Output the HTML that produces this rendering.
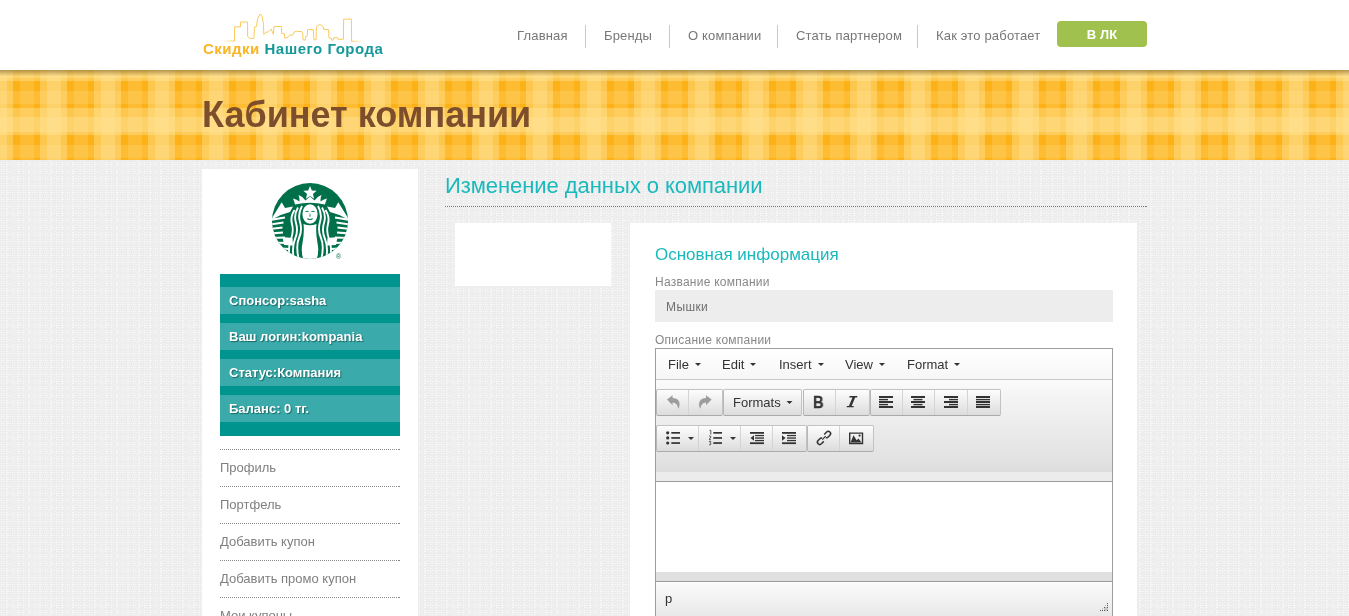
<!DOCTYPE html>
<html><head><meta charset="utf-8">
<style>
*{box-sizing:border-box}
html,body{margin:0;padding:0}
body>*{will-change:transform}
body{width:1349px;height:616px;overflow:hidden;position:relative;font-family:"Liberation Sans",sans-serif;background-color:#ececec}
.abs{position:absolute}
#hdr{left:0;top:0;width:1349px;height:70px;background:#fff}
.nav{position:absolute;top:28px;font-size:13px;color:#777;line-height:15px;white-space:nowrap;letter-spacing:.17px}
.sep{position:absolute;top:25px;width:1px;height:23px;background:#c9c9c9}
#btn{left:1057px;top:21px;width:90px;height:26px;background:#a0c14e;border-radius:4px;color:#fff;font-weight:bold;font-size:13px;text-align:center;line-height:28px;letter-spacing:.15px}
#banner{left:0;top:70px;width:1349px;height:90px;overflow:hidden}
#title{left:202px;top:94px;font-size:36px;font-weight:bold;color:#7d4e2b;line-height:41px;white-space:nowrap}
#side{left:202px;top:169px;width:216px;height:460px;background:#fff}
#teal{left:220px;top:274px;width:180px;height:162px;background:#00948f}
.row{position:absolute;left:0;width:180px;height:27px;background:#3aabaa;color:#fff;font-weight:bold;font-size:13px;line-height:15px;padding:6px 0 0 9px;text-shadow:1px 1px 1px rgba(0,50,50,.55);white-space:nowrap}
.mi{position:absolute;left:220px;width:180px;background:linear-gradient(to right,transparent 179px,#888 179px) no-repeat 0 0/180px 1px,repeating-linear-gradient(to right,#888 0 1px,transparent 1px 2px) no-repeat 0 0/180px 1px;font-size:13px;color:#808080;line-height:15px;padding-top:11px;white-space:nowrap}
#mtitle{left:445px;top:172.5px;font-size:22px;letter-spacing:-.06px;color:#19b9bd;line-height:26px;white-space:nowrap}
#mline{left:445px;top:206px;width:702px;height:1px;background:linear-gradient(to right,transparent 701px,#777 701px) no-repeat 0 0/702px 1px,repeating-linear-gradient(to right,#777 0 1px,transparent 1px 2px) no-repeat 0 0/702px 1px}
#lbox{left:455px;top:223px;width:156px;height:63px;background:#fff}
#panel{left:630px;top:223px;width:507px;height:400px;background:#fff}

#ptitle{left:655px;top:245px;font-size:17px;color:#19b9bd;line-height:20px;white-space:nowrap}
.lbl{position:absolute;left:655px;font-size:12px;color:#888;line-height:14px;letter-spacing:.25px;white-space:nowrap}
#inp{left:655px;top:290px;width:458px;height:32px;background:#ededed;font-size:12px;color:#6f6f6f;line-height:14px;padding:10px 0 0 11px;letter-spacing:.4px}
#ed{left:655px;top:348px;width:458px;height:280px;border:1px solid #9e9e9e;border-bottom:0;background:#fff}
#menubar{position:absolute;left:0;top:0;width:456px;height:31px;border-bottom:1px solid #c8c8c8;background:linear-gradient(#fff,#f6f6f6)}
.mb{position:absolute;top:8px;font-size:13px;color:#333;line-height:15px;white-space:nowrap}
.car{display:inline-block;width:0;height:0;border-left:3px solid transparent;border-right:3px solid transparent;border-top:3px solid #333;vertical-align:middle;margin-left:6px;position:relative;top:-1px}
#tb{position:absolute;left:0;top:31px;width:456px;height:102px;border-bottom:1px solid #9b9b9b;background:linear-gradient(#fbfbfb 0px,#f3f3f3 20px,#e2e2e2 80px,#dddddd 92px,#ececec 92px,#ececec 101px)}
.grp{position:absolute;height:27px;border:1px solid #c2c2c2;border-left-color:#b8b8b8;border-bottom-color:#aaa;border-radius:2px;background:linear-gradient(#fdfdfd,#dcdcdc)}
.bs{position:absolute;top:0;width:1px;height:25px;background:#d4d4d4}
#edarea{position:absolute;left:0;top:134px;width:456px;height:90px;background:#fff}
#edband{position:absolute;left:0;top:223px;width:456px;height:10px;background:#e0e0e0;border-bottom:1px solid #9b9b9b}
#status{position:absolute;left:0;top:234px;width:456px;height:40px;background:linear-gradient(#fbfbfb,#e4e4e4)}
</style></head><body>
<svg class="abs" style="left:0;top:0" width="1349" height="616" shape-rendering="crispEdges"><defs><pattern id="bgp" width="11" height="7" patternUnits="userSpaceOnUse"><rect width="11" height="7" fill="#ededed"/><g fill="#f9f9f9"><rect x="1" y="1" width="1" height="1"/><rect x="6" y="1" width="1" height="1"/><rect x="7" y="1" width="1" height="1"/><rect x="1" y="3" width="1" height="1"/><rect x="3" y="3" width="1" height="1"/><rect x="6" y="3" width="1" height="1"/><rect x="7" y="3" width="1" height="1"/><rect x="8" y="3" width="1" height="1"/><rect x="10" y="3" width="1" height="1"/><rect x="1" y="5" width="1" height="1"/><rect x="6" y="5" width="1" height="1"/><rect x="7" y="5" width="1" height="1"/></g><g fill="#f3f3f3"><rect x="3" y="1" width="1" height="1"/><rect x="3" y="5" width="1" height="1"/><rect x="4" y="6" width="1" height="1"/><rect x="9" y="0" width="1" height="1"/></g></pattern></defs><rect width="1349" height="616" fill="url(#bgp)"/></svg>
<div id="hdr" class="abs">
 <svg class="abs" style="left:0;top:0" width="400" height="70" viewBox="0 0 400 70">
  <defs><linearGradient id="fadeL" x1="224" y1="0" x2="362" y2="0" gradientUnits="userSpaceOnUse">
   <stop offset="0" stop-color="#fbc95c" stop-opacity="0.2"/><stop offset="0.08" stop-color="#fbc95c" stop-opacity="1"/>
   <stop offset="0.92" stop-color="#fbc95c" stop-opacity="1"/><stop offset="1" stop-color="#fbc95c" stop-opacity="0.2"/></linearGradient></defs>
  <path fill="none" stroke="url(#fadeL)" stroke-width="1" stroke-linejoin="round" d="M224,41 L234.5,41 L234.5,26.8 L240.5,26.8 L240.5,21.9 L247.6,21.9 L247.6,36.4 L250,38.4 L254,38.4 L254.4,27 L256.4,26.5 L257.5,19.1 L260,14 L262,15.7 L263.5,24.2 L263.75,34.4 L265.5,32.4 L268.3,31.9 L271.1,29 L273.4,34.4 L274,26.5 L281.6,26.5 L281.6,33.3 L284.5,33.9 L284.8,38.1 L287,37.8 L289.9,35 L292.8,35 L294,32.2 L296.25,31.3 L301.9,31.6 L302.8,33.3 L303,39.8 L305.3,40.1 L305.6,36.7 L307.3,36.1 L307.6,29.6 L313.3,29.6 L313.9,39.8 L316.1,39.8 L316.4,27 Q319.5,22.5 323.2,26.8 L323.5,29.3 L328.6,29.6 L328.9,37.8 L331.5,38.4 L331.75,40.1 L333.5,40.1 L334,37.6 L337.4,37.6 L338,39.3 L343.4,39.3 L343.7,19.1 L351.4,19.1 L351.6,41.25 L361.6,41.25"/>
 </svg>
 <div class="abs" id="logotxt" style="left:203px;top:40px;font-size:15px;font-weight:bold;letter-spacing:0.5px;line-height:17px;white-space:nowrap"><span style="color:#fbb423">Скидки</span> <span style="color:#17999a">Нашего Города</span></div>
 <div class="nav" style="left:517px">Главная</div>
 <div class="sep" style="left:585px"></div>
 <div class="nav" style="left:604px">Бренды</div>
 <div class="sep" style="left:669px"></div>
 <div class="nav" style="left:688px">О компании</div>
 <div class="sep" style="left:777px"></div>
 <div class="nav" style="left:796px">Стать партнером</div>
 <div class="sep" style="left:917px"></div>
 <div class="nav" style="left:936px">Как это работает</div>
 <div id="btn" class="abs">В ЛК</div>
</div>
<div id="banner" class="abs"><svg width="1349" height="90"><defs><pattern id="pl" width="54" height="54" patternUnits="userSpaceOnUse" x="13" y="11"><rect x="0" y="0" width="7" height="10" fill="#fcb116"/><rect x="0" y="10" width="7" height="13" fill="#fdbc32"/><rect x="0" y="23" width="7" height="4" fill="#fcb116"/><rect x="0" y="27" width="7" height="9" fill="#fdc74e"/><rect x="0" y="36" width="7" height="15" fill="#fed26a"/><rect x="0" y="51" width="7" height="3" fill="#fdc74e"/><rect x="7" y="0" width="14" height="10" fill="#fdbc32"/><rect x="7" y="10" width="14" height="13" fill="#fdc448"/><rect x="7" y="23" width="14" height="4" fill="#fdbc32"/><rect x="7" y="27" width="14" height="9" fill="#fecd5e"/><rect x="7" y="36" width="14" height="15" fill="#fed675"/><rect x="7" y="51" width="14" height="3" fill="#fecd5e"/><rect x="21" y="0" width="6" height="10" fill="#fcb116"/><rect x="21" y="10" width="6" height="13" fill="#fdbc32"/><rect x="21" y="23" width="6" height="4" fill="#fcb116"/><rect x="21" y="27" width="6" height="9" fill="#fdc74e"/><rect x="21" y="36" width="6" height="15" fill="#fed26a"/><rect x="21" y="51" width="6" height="3" fill="#fdc74e"/><rect x="27" y="0" width="7" height="10" fill="#fdc74e"/><rect x="27" y="10" width="7" height="13" fill="#fecd5e"/><rect x="27" y="23" width="7" height="4" fill="#fdc74e"/><rect x="27" y="27" width="7" height="9" fill="#fed46f"/><rect x="27" y="36" width="7" height="15" fill="#ffda7f"/><rect x="27" y="51" width="7" height="3" fill="#fed46f"/><rect x="34" y="0" width="14" height="10" fill="#fed26a"/><rect x="34" y="10" width="14" height="13" fill="#fed675"/><rect x="34" y="23" width="14" height="4" fill="#fed26a"/><rect x="34" y="27" width="14" height="9" fill="#ffda7f"/><rect x="34" y="36" width="14" height="15" fill="#ffde8a"/><rect x="34" y="51" width="14" height="3" fill="#ffda7f"/><rect x="48" y="0" width="6" height="10" fill="#fdc74e"/><rect x="48" y="10" width="6" height="13" fill="#fecd5e"/><rect x="48" y="23" width="6" height="4" fill="#fdc74e"/><rect x="48" y="27" width="6" height="9" fill="#fed46f"/><rect x="48" y="36" width="6" height="15" fill="#ffda7f"/><rect x="48" y="51" width="6" height="3" fill="#fed46f"/></pattern><linearGradient id="sh" x1="0" y1="0" x2="0" y2="1"><stop offset="0" stop-color="#503700" stop-opacity=".42"/><stop offset=".022" stop-color="#503700" stop-opacity=".3"/><stop offset=".05" stop-color="#503700" stop-opacity=".12"/><stop offset=".072" stop-color="#503700" stop-opacity="0"/></linearGradient></defs><rect width="1349" height="90" fill="url(#pl)" shape-rendering="crispEdges"/><rect width="1349" height="90" fill="url(#sh)"/></svg></div>
<div id="title" class="abs">Кабинет компании</div>

<div id="side" class="abs"></div>
<svg class="abs" style="left:270px;top:181px" width="80" height="80" viewBox="0 0 80 80">
 <defs><clipPath id="cc"><circle cx="40" cy="40" r="38"/></clipPath></defs>
 <circle cx="40" cy="40" r="38" fill="#00704a"/>
 <g clip-path="url(#cc)" fill="#fff" stroke="none">
  <path d="M40.00,5.00 L41.82,9.49 L46.66,9.84 L42.95,12.96 L44.11,17.66 L40.00,15.10 L35.89,17.66 L37.05,12.96 L33.34,9.84 L38.18,9.49 Z"/>
  <path d="M23,17.5 Q27,18.5 29.5,20.5 Q29.5,16 28.5,14 Q33,15.5 35.5,19.5 L40,15.5 L44.5,19.5 Q47,15.5 51.5,14 Q50.5,16 50.5,20.5 Q53,18.5 57,17.5 Q55.5,21 55,23.6 Q40,19.8 25,23.6 Q24.5,21 23,17.5 Z"/>
  <path d="M2,37 L11.7,21.3 L15,27 L23,25.5 L20,31 Q11,33 2,38.5 Z"/>
  <path d="M78,37 L68.3,21.3 L65,27 L57,25.5 L60,31 Q69,33 78,38.5 Z"/>
  <path d="M33.5,43 Q40,45.5 46.5,43 Q45.5,52 47.5,62 Q49.5,72 46,80 L34,80 Q30.5,72 32.5,62 Q34.5,52 33.5,43 Z"/>
  <path d="M12.5,56 L22.5,57 L23,64.5 L14,64 Z"/>
  <path d="M67.5,56 L57.5,57 L57,64.5 L66,64 Z"/>
 </g>
 <g clip-path="url(#cc)" fill="none" stroke="#fff" stroke-linecap="butt">
  <path stroke-width="2.1" d="M0,39 L15,36.5 M0,43.5 L13.5,41.5 M0,48 L12.5,46.5 M0,52.5 L13,51.5 M0,57 L15,56.5 M0,61.5 L17,62 M4,67 L19,68"/>
  <path stroke-width="2.1" d="M80,39 L65,36.5 M80,43.5 L66.5,41.5 M80,48 L67.5,46.5 M80,52.5 L67,51.5 M80,57 L65,56.5 M80,61.5 L63,62 M76,67 L61,68"/>
  <path stroke-width="1.9" d="M32,25 Q27.5,33 30,41 Q32.5,49 29,57 Q25.5,65 29,80"/>
  <path stroke-width="1.9" d="M28,26.5 Q23.5,34 26,42 Q28.5,50 25,58 Q21.5,66 24,80"/>
  <path stroke-width="1.9" d="M24.5,29 Q20,36 22,43 Q24,50 21,58 Q18,66 19.5,76"/>
  <path stroke-width="1.9" d="M48,25 Q52.5,33 50,41 Q47.5,49 51,57 Q54.5,65 51,80"/>
  <path stroke-width="1.9" d="M52,26.5 Q56.5,34 54,42 Q51.5,50 55,58 Q58.5,66 56,80"/>
  <path stroke-width="1.9" d="M55.5,29 Q60,36 58,43 Q56,50 59,58 Q62,66 60.5,76"/>
 </g>
 <ellipse cx="40" cy="33" rx="7.6" ry="9.8" fill="#fff"/>
 <g fill="#00704a">
  <path d="M35.3,30.3 Q37,29.2 38.7,30.3 L38.7,31.1 Q37,30.3 35.3,31.1 Z"/>
  <path d="M41.3,30.3 Q43,29.2 44.7,30.3 L44.7,31.1 Q43,30.3 41.3,31.1 Z"/>
  <path d="M40,31.5 L39.1,35.6 L40.9,35.6 Z" opacity=".7"/>
  <path d="M37.3,37.8 Q40,39.6 42.7,37.8 Q40,39.1 37.3,37.8 Z" stroke="#00704a" stroke-width=".7"/>
 </g>
</svg>
<div class="abs" style="left:336px;top:253px;font-size:7px;color:#00704a;line-height:8px">&#174;</div>
<div id="teal" class="abs">
 <div class="row" style="top:13px">Спонсор:sasha</div>
 <div class="row" style="top:49px">Ваш логин:kompania</div>
 <div class="row" style="top:85px">Статус:Компания</div>
 <div class="row" style="top:121px">Баланс: 0 тг.</div>
</div>
<div class="mi" style="top:449px">Профиль</div>
<div class="mi" style="top:486px">Портфель</div>
<div class="mi" style="top:523px">Добавить купон</div>
<div class="mi" style="top:560px">Добавить промо купон</div>
<div class="mi" style="top:597px">Мои купоны</div>

<div id="mtitle" class="abs">Изменение данных о компании</div>
<div id="mline" class="abs"></div>
<div id="lbox" class="abs"></div>
<div id="panel" class="abs"></div>
<div id="ptitle" class="abs">Основная информация</div>
<div class="lbl" style="top:275px">Название компании</div>
<div id="inp" class="abs">Мышки</div>
<div class="lbl" style="top:333px">Описание компании</div>
<div id="ed" class="abs">
 <div id="menubar">
  <div class="mb" style="left:12px">File<span class="car"></span></div>
  <div class="mb" style="left:66px">Edit<span class="car"></span></div>
  <div class="mb" style="left:123px">Insert<span class="car"></span></div>
  <div class="mb" style="left:189px">View<span class="car"></span></div>
  <div class="mb" style="left:251px">Format<span class="car"></span></div>
 </div>
 <div id="tb">
  <div class="grp" style="left:0;top:9px;width:67px"><div class="bs" style="left:31px"></div></div>
  <div class="grp" style="left:67px;top:9px;width:79px"></div>
  <div class="grp" style="left:147px;top:9px;width:67px"><div class="bs" style="left:31px"></div></div>
  <div class="grp" style="left:214px;top:9px;width:131px"><div class="bs" style="left:31px"></div><div class="bs" style="left:63px"></div><div class="bs" style="left:96px"></div></div>
  <div class="grp" style="left:0;top:45px;width:151px"><div class="bs" style="left:41px"></div><div class="bs" style="left:83px"></div><div class="bs" style="left:115px"></div></div>
  <div class="grp" style="left:151px;top:45px;width:67px"><div class="bs" style="left:31px"></div></div>
 </div>
 <div id="edarea"></div>
 <div id="edband"></div>
 <div id="status"><div class="abs" style="left:9px;top:8px;font-size:13px;color:#333;line-height:15px">p</div></div>
</div>

<svg class="abs" style="left:0;top:0;pointer-events:none" width="1349" height="616">
 <g fill="#9d9d9d">
  <path d="M667,399.6 L672.6,395.2 L672.6,397.9 Q679.6,398.2 679.6,404.2 Q679.6,406.6 678.2,408.8 Q677.6,403.2 672.6,402.6 L672.6,405.2 Z"/>
  <path d="M711.6,399.6 L706,395.2 L706,397.9 Q699,398.2 699,404.2 Q699,406.6 700.4,408.8 Q701,403.2 706,402.6 L706,405.2 Z"/>
 </g>
 <g fill="#333">
  <path d="M786.5,401 L792.5,401 L789.5,404 Z"/>
  <path d="M849.6,396 L857.4,396 L857.1,397.4 L855.2,397.4 L851.6,405.9 L853.8,405.9 L853.5,407.3 L846.6,407.3 L846.9,405.9 L848.9,405.9 L852.5,397.4 L849.3,397.4 Z"/>
  <!-- align left -->
  <rect x="879" y="396" width="14" height="2"/><rect x="879" y="398.9" width="9" height="1.4"/><rect x="879" y="401" width="14" height="2"/><rect x="879" y="403.9" width="9" height="1.4"/><rect x="879" y="406" width="14" height="2"/>
  <!-- align center -->
  <rect x="911" y="396" width="14" height="2"/><rect x="913.5" y="398.9" width="9" height="1.4"/><rect x="911" y="401" width="14" height="2"/><rect x="913.5" y="403.9" width="9" height="1.4"/><rect x="911" y="406" width="14" height="2"/>
  <!-- align right -->
  <rect x="944" y="396" width="14" height="2"/><rect x="949" y="398.9" width="9" height="1.4"/><rect x="944" y="401" width="14" height="2"/><rect x="949" y="403.9" width="9" height="1.4"/><rect x="944" y="406" width="14" height="2"/>
  <!-- justify -->
  <rect x="976" y="396" width="14" height="2"/><rect x="976" y="398.9" width="14" height="1.4"/><rect x="976" y="401" width="14" height="2"/><rect x="976" y="403.9" width="14" height="1.4"/><rect x="976" y="406" width="14" height="2"/>
  <!-- bullist -->
  <circle cx="667.7" cy="432.8" r="1.6"/><circle cx="667.7" cy="437.9" r="1.6"/><circle cx="667.7" cy="443" r="1.6"/>
  <rect x="671.3" y="432" width="8.7" height="1.7"/><rect x="671.3" y="437.1" width="8.7" height="1.7"/><rect x="671.3" y="442.2" width="8.7" height="1.7"/>
  <path d="M688,437 L694,437 L691,440 Z"/>
  <!-- numlist -->
  <path d="M709.5,430.6 L710.8,430.2 L710.8,434.5" fill="none" stroke="#333" stroke-width=".8"/>
  <path d="M709,436 Q710.9,435.6 710.9,436.8 Q710.5,438.2 709,439.3 L711,439.3" fill="none" stroke="#333" stroke-width=".8"/>
  <path d="M709,441.3 L710.9,441.3 L709.9,442.6 Q711.2,442.9 710.9,444.2 Q710.4,445.2 709,444.8" fill="none" stroke="#333" stroke-width=".8"/>
  <rect x="713.3" y="432" width="8.7" height="1.7"/><rect x="713.3" y="437.1" width="8.7" height="1.7"/><rect x="713.3" y="442.2" width="8.7" height="1.7"/>
  <path d="M730,437 L736,437 L733,440 Z"/>
  <!-- outdent -->
  <rect x="750" y="432" width="14" height="1.8"/><rect x="755" y="434.9" width="9" height="1.3"/><rect x="755" y="437.4" width="9" height="1.3"/><rect x="755" y="439.9" width="9" height="1.3"/><rect x="750" y="442.3" width="14" height="1.8"/>
  <path d="M750.5,438 L754,435.3 L754,440.7 Z"/>
  <!-- indent -->
  <rect x="782" y="432" width="14" height="1.8"/><rect x="787" y="434.9" width="9" height="1.3"/><rect x="787" y="437.4" width="9" height="1.3"/><rect x="787" y="439.9" width="9" height="1.3"/><rect x="782" y="442.3" width="14" height="1.8"/>
  <path d="M785.5,438 L782,435.3 L782,440.7 Z"/>
  <!-- image -->
  <path fill-rule="evenodd" d="M849,432.4 L863.2,432.4 L863.2,444.2 L849,444.2 Z M850.4,433.8 L850.4,442.8 L861.8,442.8 L861.8,433.8 Z"/>
  <path d="M850.6,442.4 L853.5,435.3 L856.6,440.2 L858.6,438.6 L861.4,442.4 Z"/>
  <circle cx="859.6" cy="435.6" r="1.1"/>
 </g>
 <!-- link -->
 <g fill="none" stroke="#333" stroke-width="1.5">
  <path d="M-2.3,2.2 L-2.3,-1.2 A2.3,2.3 0 0 1 2.3,-1.2 L2.3,1.2 A2.3,2.3 0 0 1 1.1,3.3" transform="translate(827.4,434.5) rotate(45)"/>
  <path d="M-2.3,2.2 L-2.3,-1.2 A2.3,2.3 0 0 1 2.3,-1.2 L2.3,1.2 A2.3,2.3 0 0 1 1.1,3.3" transform="translate(820.6,441.3) rotate(225)"/>
  <path d="M822.3,439.6 L825.7,436.2" stroke-width="1.2"/>
 </g>
</svg>
<div class="abs" style="left:733px;top:395px;font-size:13px;color:#333;line-height:15px;white-space:nowrap">Formats</div>
<div class="abs" style="left:812.5px;top:393px;font-size:17px;font-weight:bold;color:#333;line-height:19px;transform:scaleX(.86);transform-origin:0 0;-webkit-text-stroke:.35px #333">B</div>
<svg class="abs" style="left:1096px;top:598px" width="16" height="18" shape-rendering="crispEdges"><rect x="8" y="9" width="4" height="4" fill="#c8c8c8"/><g fill="#555">
<rect x="11" y="5" width="1" height="1"/><rect x="9" y="7" width="1" height="1" opacity=".4"/><rect x="11" y="7" width="1" height="1"/>
<rect x="8" y="9" width="1" height="1"/><rect x="11" y="9" width="1" height="1"/><rect x="6" y="10" width="1" height="1" opacity=".35"/>
<rect x="4" y="12" width="1" height="1"/><rect x="6" y="12" width="1" height="1"/><rect x="8" y="12" width="1" height="1"/><rect x="11" y="12" width="1" height="1"/>
</g></svg>
</body></html>
